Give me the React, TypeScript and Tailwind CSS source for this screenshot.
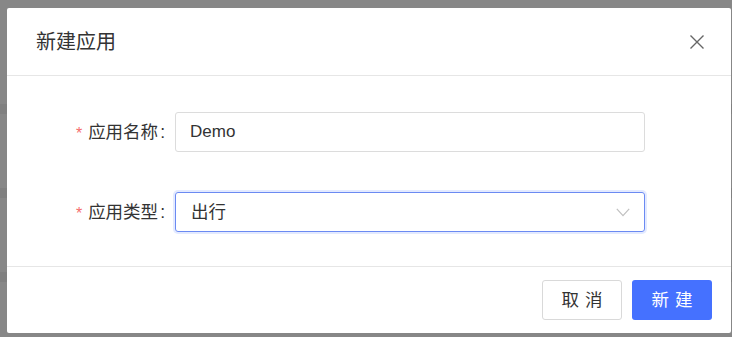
import React from 'react'

const cjk = "'Liberation Sans', 'Noto Sans CJK SC', sans-serif"

function FormRow({ label, children }: { label: string; children: React.ReactNode }) {
  return (
    <div className="flex items-center h-[40px]">
      <div className="w-[158px] flex justify-end items-center text-[17.5px] text-[#333]">
        <span className="text-[#f56c6c] text-[16px] mr-[6px] mt-[3px]">*</span>
        <span>{label}</span>
        <span className="ml-[2px]">:</span>
      </div>
      <div className="ml-[10px] w-[470px] h-[40px]">{children}</div>
    </div>
  )
}

export default function App() {
  return (
    <div className="relative w-[732px] h-[337px] overflow-hidden bg-[#878787]" style={{ fontFamily: cjk }}>
      {/* page behind the overlay */}
      <div className="flex flex-col pt-[104px]">
        <div className="h-[10px] bg-[#808080]" />
        <div className="h-[74px]" />
        <div className="h-[10px] bg-[#808080]" />
        <div className="h-[74px]" />
        <div className="h-[10px] bg-[#808080]" />
      </div>

      {/* Dialog */}
      <div className="absolute left-[7px] top-[8px] w-[724px] h-[325px] bg-white rounded-[2px] flex flex-col">
        {/* Header */}
        <div className="h-[68px] shrink-0 flex items-center justify-between pl-[29px] pr-[26px] border-b border-[#e6e6e6]">
          <span className="text-[20px] text-[#333] leading-none">新建应用</span>
          <svg width="16" height="16" viewBox="0 0 16 16" className="mt-[1px]">
            <path d="M1.5 1.5 L14.5 14.5 M14.5 1.5 L1.5 14.5" stroke="#666" strokeWidth="1.4" fill="none" />
          </svg>
        </div>

        {/* Body */}
        <div className="h-[190px] shrink-0 pt-[36px] flex flex-col gap-[40px]">
          <FormRow label="应用名称">
            <div className="h-full border border-[#dcdcdc] rounded-[3px] flex items-center px-[14px] text-[17px] text-[#333]">
              Demo
            </div>
          </FormRow>
          <FormRow label="应用类型">
            <div className="h-full border border-[#6b8af2] rounded-[3px] shadow-[0_0_0_2px_rgba(70,113,255,0.15)] flex items-center justify-between pl-[15px] pr-[14px] text-[17.5px] text-[#333]">
              <span>出行</span>
              <svg width="14" height="9" viewBox="0 0 14 9">
                <path d="M0.8 0.8 L7 7.6 L13.2 0.8" stroke="#c0c0c0" strokeWidth="1.2" fill="none" />
              </svg>
            </div>
          </FormRow>
        </div>

        {/* Footer */}
        <div className="border-t border-[#e6e6e6] flex justify-end gap-[10px] pt-[13px] pr-[19px]">
          <button className="w-[80px] h-[40px] border border-[#d9d9d9] rounded-[3px] bg-white text-[17.5px] text-[#333] tracking-[0.34em] pl-[0.34em]">
            取消
          </button>
          <button className="w-[80px] h-[40px] rounded-[3px] bg-[#4571ff] text-[17.5px] text-white tracking-[0.34em] pl-[0.34em]">
            新建
          </button>
        </div>
      </div>
    </div>
  )
}
